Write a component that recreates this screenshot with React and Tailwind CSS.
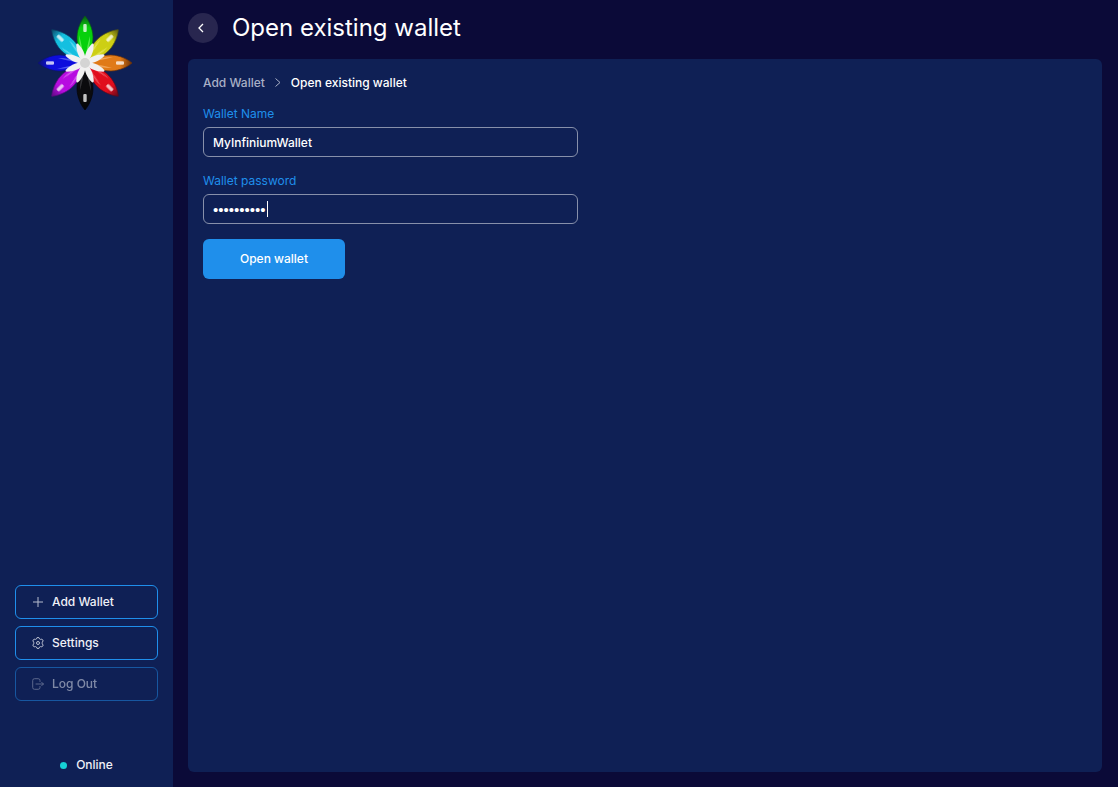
import React, { useState } from "react";

const PETALS = [
  { id: "black", angle: 180, edge: "#050506", main: "#0b0b0e", light: "#55555a" },
  { id: "green", angle: 0, edge: "#0a5a14", main: "#06d00c", light: "#8dff7e" },
  { id: "yellow", angle: 45, edge: "#5b5a10", main: "#cdcf14", light: "#f6f58a" },
  { id: "orange", angle: 90, edge: "#6d3208", main: "#e07a18", light: "#ffc588" },
  { id: "red", angle: 135, edge: "#5d0a1c", main: "#e00d1d", light: "#ff8e92" },
  { id: "violet", angle: 225, edge: "#5c0a80", main: "#b70ce0", light: "#f09aff" },
  { id: "blue", angle: 270, edge: "#0c1172", main: "#0d0ddd", light: "#7e8cff" },
  { id: "cyan", angle: 315, edge: "#0b4566", main: "#14bfe0", light: "#a3f3ff" },
];

function Logo() {
  return (
    <svg viewBox="0 0 96 96" className="size-24" role="img" aria-label="Infinium">
      <defs>
        {PETALS.map((p) => (
          <linearGradient key={p.id} id={p.id} x1="0" x2="0" y1="0" y2="1">
            <stop offset="0" stopColor={p.edge} />
            <stop offset="0.25" stopColor={p.main} />
            <stop offset="1" stopColor={p.main} />
          </linearGradient>
        ))}
        <filter id="soft" x="-50%" y="-50%" width="200%" height="200%">
          <feGaussianBlur stdDeviation="0.6" />
        </filter>
      </defs>
      {PETALS.map((p) => (
        <g key={p.id} transform={`rotate(${p.angle} 48 48)`}>
          <path
            d="M48 1C44.500 5 40.300 13 40 22C39.900 30 43 40 48 48C53 40 56.100 30 56 22C55.700 13 51.500 5 48 1Z"
            fill={`url(#${p.id})`}
            stroke={p.edge}
            strokeWidth="0.7"
          />
          <path d="M42 20C42 28 44 36 46.500 42C45.500 34 44 27 42 20Z" fill={p.light} opacity="0.6" filter="url(#soft)" />
          <path d="M53 21C53.500 28 51.500 35 49 42C49.500 34 51 28 53 21Z" fill={p.light} opacity="0.55" filter="url(#soft)" />
          <rect x="46.300" y="9" width="3.400" height="8" rx="1" fill="#fff" opacity="0.75" filter="url(#soft)" />
        </g>
      ))}
      {PETALS.map((p) => (
        <path
          key={p.id}
          transform={`rotate(${p.angle + 22.5} 48 48)`}
          d="M48 50C44.800 44 43.600 36 47 27.500Q48 26.500 49 27.500C52.400 36 51.200 44 48 50Z"
          fill="#f1f1f1"
        />
      ))}
      <circle cx="48" cy="48" r="5" fill="#d4d4d4" filter="url(#soft)" />
    </svg>
  );
}

function PlusIcon() {
  return (
    <svg viewBox="0 0 12 12" className="size-3 shrink-0" fill="none" stroke="currentColor" aria-hidden="true">
      <path d="M6 1v10M1 6h10" />
    </svg>
  );
}

function GearIcon() {
  return (
    <svg viewBox="0 0 12 12" className="size-3 shrink-0" fill="none" stroke="currentColor" strokeLinejoin="round" aria-hidden="true">
      <path d="M4.900 .8Q6 .1 7.100 .8L7.500 1.900Q8 2.500 8.600 2.400L9.900 2.200Q11 2.700 11.100 3.900L10.300 5.200Q9.900 6 10.300 6.800L11.100 8.100Q11 9.300 9.900 9.800L8.600 9.600Q8 9.500 7.500 10.100L7.100 11.200Q6 11.900 4.900 11.200L4.500 10.100Q4 9.500 3.400 9.600L2.100 9.800Q1 9.300 .9 8.100L1.700 6.800Q2.100 6 1.700 5.200L.9 3.900Q1 2.700 2.100 2.200L3.400 2.400Q4 2.500 4.500 1.900Z" />
      <circle cx="6" cy="6" r="1.500" />
    </svg>
  );
}

function LogoutIcon() {
  return (
    <svg viewBox="0 0 12 12" className="size-3 shrink-0" fill="none" stroke="currentColor" strokeWidth="0.9" strokeLinecap="round" strokeLinejoin="round" aria-hidden="true">
      <path d="M8 3.500V2.500A1.800 1.800 0 0 0 6.200.7H2.500A1.800 1.800 0 0 0 .7 2.500v7a1.800 1.800 0 0 0 1.800 1.800h3.700A1.800 1.800 0 0 0 8 9.500V8.500M4 6h7.400M9.700 4.300L11.400 6 9.700 7.700" />
    </svg>
  );
}

function SideButton({ icon, label, disabled = false }) {
  return (
    <button
      type="button"
      disabled={disabled}
      className="flex h-[34px] w-full items-center gap-2 rounded-md border border-[#1f8feb] px-4 text-xs font-medium text-[#eff1f7] disabled:opacity-50"
    >
      <span className="opacity-75">{icon}</span>
      {label}
    </button>
  );
}

function Field({ id, label, children }) {
  return (
    <div className="flex flex-col gap-[3px]">
      <label htmlFor={id} className="text-xs leading-5 text-[#1f8feb]">
        {label}
      </label>
      {children}
    </div>
  );
}

export default function App() {
  const [name, setName] = useState("MyInfiniumWallet");
  const [password, setPassword] = useState("wallet1234");
  const [resting, setResting] = useState(true);

  return (
    <div className="flex min-h-screen bg-[#0b0a38] font-['Inter',sans-serif] text-white">
      <aside className="flex w-[173px] shrink-0 flex-col bg-[#0f2055] px-[15px] pt-[15px] pb-3">
        <div className="flex justify-center pr-1">
          <Logo />
        </div>
        <nav className="mt-auto flex flex-col gap-[7px]">
          <SideButton icon={<PlusIcon />} label="Add Wallet" />
          <SideButton icon={<GearIcon />} label="Settings" />
          <SideButton icon={<LogoutIcon />} label="Log Out" disabled />
        </nav>
        <div className="mt-[54px] flex items-center justify-center gap-[9px] text-xs leading-5 font-medium text-[#eff1f7]">
          <span className="size-[7px] rounded-full bg-[#16d1d6]" />
          Online
        </div>
      </aside>

      <main className="flex min-w-0 flex-1 flex-col pt-[13px] pr-4 pb-[15px] pl-[15px]">
        <header className="flex h-[30px] items-center gap-[14px]">
          <button
            type="button"
            aria-label="Back"
            className="flex size-[30px] shrink-0 items-center justify-center rounded-full bg-[#28264f]"
          >
            <svg viewBox="0 0 12 12" className="mr-1 size-3" fill="none" stroke="currentColor" strokeWidth="1.300" aria-hidden="true">
              <path d="M8 2L4 6l4 4" />
            </svg>
          </button>
          <h1 className="text-2xl leading-[30px]">Open existing wallet</h1>
        </header>

        <section className="mt-4 flex-1 rounded-md bg-[#0f2055] px-[15px] pt-[14px]">
          <nav aria-label="Breadcrumb" className="flex items-center gap-[7px] text-xs leading-5 font-medium">
            <a href="#add-wallet" className="text-[#a9b0c6]">Add Wallet</a>
            <svg viewBox="0 0 12 12" className="size-3" fill="none" stroke="#a9b0c6" aria-hidden="true">
              <path d="M3.500 1.500L8 5.500 3.500 9.500" />
            </svg>
            <span aria-current="page">Open existing wallet</span>
          </nav>

          <form className="mt-[11px] flex max-w-[375px] flex-col gap-[14px]" onSubmit={(e) => e.preventDefault()}>
            <Field id="wallet-name" label="Wallet Name">
              <input
                id="wallet-name"
                type="text"
                value={name}
                onChange={(e) => setName(e.target.value)}
                className="h-[30px] w-full rounded-md border border-[#8790aa] bg-transparent px-[9px] text-xs font-medium text-white outline-none"
              />
            </Field>
            <Field id="wallet-password" label="Wallet password">
              <div className="relative">
                <input
                  id="wallet-password"
                  type="password"
                  value={password}
                  onFocus={() => setResting(false)}
                  onChange={(e) => setPassword(e.target.value)}
                  className="h-[30px] w-full rounded-md border border-[#8790aa] bg-transparent px-[9px] font-['Liberation_Sans',sans-serif] text-[15px] text-white outline-none"
                />
                {resting && <span className="absolute top-[7px] left-16 h-4 w-px bg-white" aria-hidden="true" />}
              </div>
            </Field>
            <button type="submit" className="mt-px h-10 w-[142px] rounded-md bg-[#1f8feb] text-xs font-medium">
              Open wallet
            </button>
          </form>
        </section>
      </main>
    </div>
  );
}
